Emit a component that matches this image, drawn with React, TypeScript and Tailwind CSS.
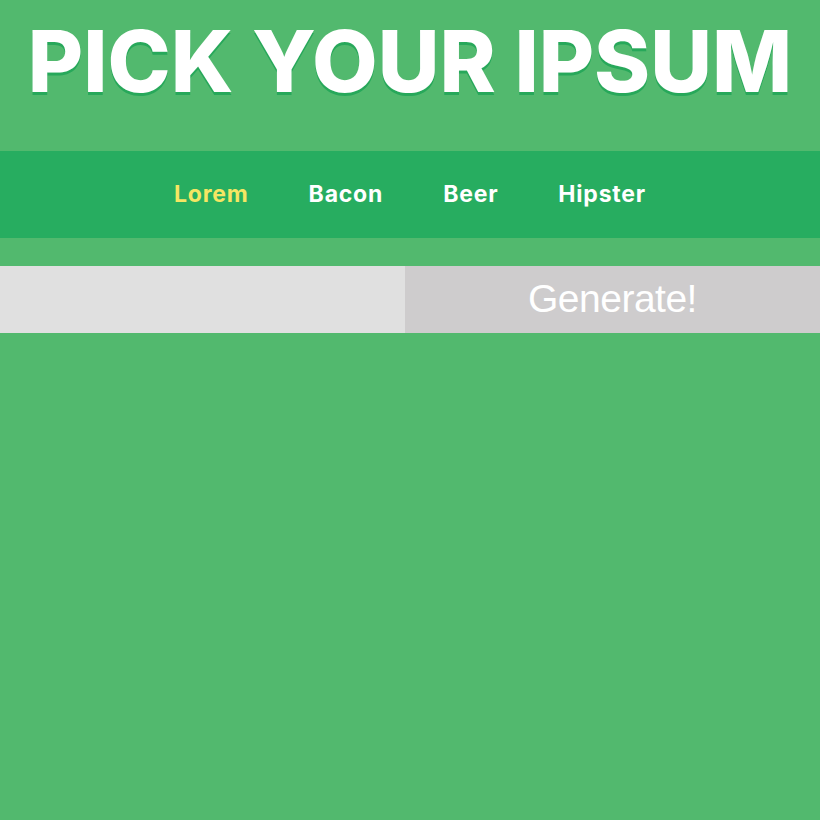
import React, { useState } from 'react';

const tabs = ['Lorem', 'Bacon', 'Beer', 'Hipster'];

const App: React.FC = () => {
  const [active, setActive] = useState('Lorem');

  return (
    <div className="min-h-screen w-full bg-[#52b96e] font-['Inter',sans-serif]">
      {/* Title */}
      <header className="h-[151px] flex justify-center pt-[19px]">
        <h1 className="text-[85px] leading-[86px] font-extrabold text-white tracking-[0px] [text-shadow:0_3px_0_#27a85a]">
          PICK YOUR IPSUM
        </h1>
      </header>

      {/* Ipsum picker */}
      <nav className="h-[87px] bg-[#27ad60] flex items-center justify-center gap-[60px]">
        {tabs.map((t) => (
          <button
            key={t}
            onClick={() => setActive(t)}
            className={`text-[23px] font-bold tracking-[0.8px] ${active === t ? 'text-[#f5e663]' : 'text-white'}`}
          >
            {t}
          </button>
        ))}
      </nav>

      {/* Generator */}
      <div className="mt-[28px] flex h-[67px]">
        <input className="w-[405px] bg-[#e0e0e0] outline-none px-4" />
        <button className="flex-1 bg-[#cecccd] text-white text-[39px] tracking-[-0.5px] font-['Liberation_Sans',Arial,sans-serif]">
          Generate!
        </button>
      </div>
    </div>
  );
};

export default App;
